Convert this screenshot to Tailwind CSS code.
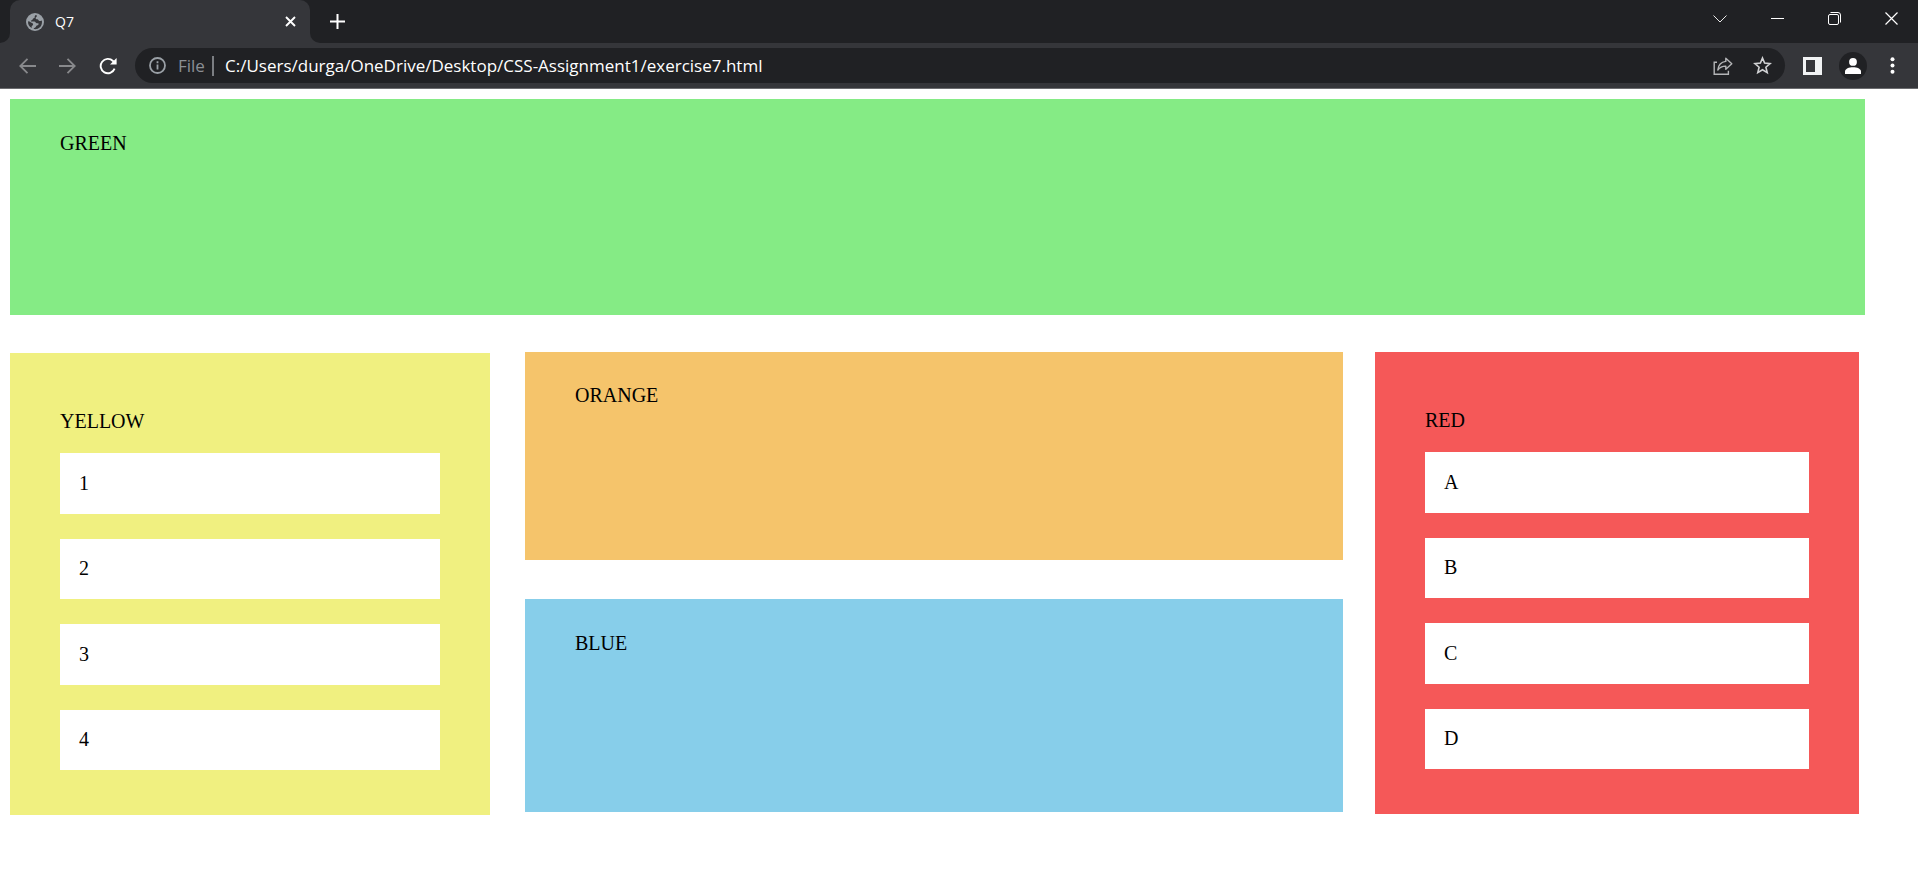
<!DOCTYPE html>
<html lang="en">
<head>
<meta charset="utf-8">
<title>Q7</title>
<script src="https://cdn.jsdelivr.net/npm/@tailwindcss/browser@4"></script>
</head>
<body class="min-h-screen bg-white text-black">

<header class="border-b border-[#6b6c6f] bg-[#35363a] font-['Open_Sans',sans-serif] text-white">
  <!-- Tab strip -->
  <div class="flex h-[43px] bg-[#202124]">
    <div class="flex w-[10px] items-end bg-[#35363a]"><span class="h-full w-full rounded-br-[10px] bg-[#202124]"></span></div>
    <div class="flex w-[300px] items-center rounded-t-[10px] bg-[#35363a] pr-[14px] pl-4">
      <svg class="size-[18px]" viewBox="0 0 18 18">
        <circle cx="9" cy="9" r="9" fill="#9aa0a6"/>
        <path d="M10 2.1c-1 .4-1.500 1.200-1.300 2.200.100.700-.9.800-1.500 1.100-.9.500-.4 1.600-1.300 1.900-.8.200-1.200.3-.9 1.100h3.200c1.600 0 1.400 1.900 2.700 1.900h1.500c.7 1.300-.4 2.200-1.500 2.200-.8 0-.8 1.300-1.300 1.800-.6.600-1.900.6-1.900 1.700 4.100.9 8.300-2.100 8.300-7 0-.6-.1-1-.2-1.400-.5.500-1.600.6-2.400.3-1.200-.5-.9-1.700-2-1.700-1.200 0-1.900-.3-1.700-1.500.1-.9 1.200-.9 1.200-1.800-.1-.4-.5-.7-.9-.8zM2.100 8.300c-.4 3 1 5.500 3.600 6.800.2-.8-.2-1.300.1-2 .3-.8 1.300-.7 1.300-1.700 0-1.700-1.600-1.400-2.500-2.200-.6-.6-1.500-.9-2.500-.9z" fill="#35363a"/>
      </svg>
      <span class="ml-[11px] grow text-[14px] leading-5">Q7</span>
      <button aria-label="Close tab">
        <svg class="size-[11px]" viewBox="0 0 11 11" fill="none" stroke="#fff" stroke-width="1.900"><path d="M1 1l9 9M10 1L1 10"/></svg>
      </button>
    </div>
    <div class="flex w-[10px] bg-[#35363a]"><span class="h-full w-full rounded-bl-[10px] bg-[#202124]"></span></div>
    <button aria-label="New tab" class="ml-[10px]">
      <svg class="size-[15px]" viewBox="0 0 15 15" fill="none" stroke="#fff" stroke-width="2"><path d="M7.500 0v15M0 7.500h15"/></svg>
    </button>
    <div class="ml-auto flex h-[37px] items-center gap-11 pr-5 text-white">
      <button aria-label="Search tabs"><svg class="size-[14px]" viewBox="0 0 14 14" fill="none" stroke="currentColor" stroke-width="0.900"><path d="M.5 3.500L7 10l6.500-6.500"/></svg></button>
      <button aria-label="Minimize"><svg class="size-[13px]" viewBox="0 0 13 13" fill="none" stroke="currentColor"><path d="M0 6.500h13"/></svg></button>
      <button aria-label="Restore"><svg class="size-[13px]" viewBox="0 0 13 13" fill="none" stroke="currentColor"><rect x=".5" y="2.500" width="10" height="10" rx="1.500"/><path d="M2.500.5H10A2.500 2.500 0 0112.500 3v7.500"/></svg></button>
      <button aria-label="Close window"><svg class="size-[13px]" viewBox="0 0 13 13" fill="none" stroke="currentColor" stroke-width="1.200"><path d="M.5.500l12 12M12.500.5l-12 12"/></svg></button>
    </div>
  </div>

  <!-- Toolbar -->
  <div class="flex items-center py-[5px] pr-[23px] pl-[19px]">
    <button aria-label="Back"><svg class="h-4 w-[17px]" viewBox="0 0 17 16" fill="none" stroke="#88898c" stroke-width="1.800"><path d="M17 8H1.500M8.500.8L1.300 8l7.200 7.200"/></svg></button>
    <button aria-label="Forward" class="ml-[23px]"><svg class="h-4 w-[17px]" viewBox="0 0 17 16" fill="none" stroke="#88898c" stroke-width="1.800"><path d="M0 8h15.500M8.500.8L15.700 8l-7.200 7.200"/></svg></button>
    <button aria-label="Reload" class="ml-[23px]"><svg class="size-[18px]" viewBox="0 0 18 18" fill="none"><path d="M15.600 11.700A7.200 7.200 0 1 1 14 4l1.200 1.200" stroke="#fff" stroke-width="1.900"/><path d="M17.600 1v6.600H11z" fill="#fff"/></svg></button>
    <div class="ml-[18px] flex h-[35px] grow items-center rounded-full bg-[#202124] pr-[13px] pl-[14px] text-[17px] leading-6">
      <button aria-label="Site information"><svg class="size-[17px]" viewBox="0 0 17 17" fill="none"><circle cx="8.500" cy="8.500" r="7.500" stroke="#9aa0a6" stroke-width="1.800"/><path d="M8.500 7.500v5M8.500 4.300v1.900" stroke="#9aa0a6" stroke-width="1.800"/></svg></button>
      <span class="ml-3 w-[34px] text-[#8b8f94]">File</span>
      <span class="h-5 w-[2px] bg-[#7b7e82]"></span>
      <input aria-label="Address" class="ml-[11px] min-w-0 grow bg-transparent outline-none" value="C:/Users/durga/OneDrive/Desktop/CSS-Assignment1/exercise7.html">
      <button aria-label="Share"><svg class="h-[18px] w-5" viewBox="0 0 20 18" fill="none" stroke="#b4b5b7" stroke-width="1.400"><path d="M4 5.200H1.200v12h14.200v-3.400"/><path d="M12.800 1.200l6 5.600-6 5.500V9.100c-3.600-.1-6 1.200-8 3.900.5-4.400 3-8 8-8.600z" stroke-linejoin="round"/></svg></button>
      <button aria-label="Bookmark" class="ml-5"><svg class="size-[19px]" viewBox="0 0 19 19" fill="none" stroke="#d0d1d3" stroke-width="1.600"><path d="M9.500 2l2.100 5.100 5.500.5-4.200 3.600 1.300 5.400-4.700-2.900-4.700 2.900 1.300-5.400-4.200-3.600 5.500-.5z"/></svg></button>
    </div>
    <button aria-label="Side panel" class="ml-[18px]"><svg class="h-[18px] w-[19px]" viewBox="0 0 19 18"><path d="M0 0h19v18H0zM3 3v12h9V3z" fill="#f1f3f4" fill-rule="evenodd"/></svg></button>
    <button aria-label="Profile" class="ml-[17px] flex size-7 items-center justify-center rounded-full bg-[#202124]"><svg class="h-4 w-4" viewBox="0 0 16 16" fill="#fff"><circle cx="8" cy="3.900" r="3.900"/><path d="M0 16v-2.400C0 10.800 4 9.300 8 9.300s8 1.500 8 4.300V16z"/></svg></button>
    <button aria-label="Menu" class="ml-[23px]"><svg class="h-[17px] w-[5px]" viewBox="0 0 5 17" fill="#fff"><circle cx="2.500" cy="2.200" r="2"/><circle cx="2.500" cy="8.500" r="2"/><circle cx="2.500" cy="14.800" r="2"/></svg></button>
  </div>
</header>

<main class="pt-[10px] pr-[53px] pl-[10px] font-['Liberation_Serif',serif] text-[20px] leading-[23px]">
  <section class="h-[216px] bg-[#85eb85] px-[50px] pt-[33px]"><h2>GREEN</h2></section>

  <div class="mt-[37px] mr-[6px] grid grid-cols-[480fr_821fr_484fr] items-start gap-x-8">
    <section class="mt-px bg-[#f0f080] px-[50px] pt-[57px] pb-[45px]">
      <h2>YELLOW</h2>
      <ul class="mt-5 grid h-[317px] auto-rows-fr gap-[25px]">
        <li class="flex items-center bg-white px-[19px]">1</li>
        <li class="flex items-center bg-white px-[19px]">2</li>
        <li class="flex items-center bg-white px-[19px]">3</li>
        <li class="flex items-center bg-white px-[19px]">4</li>
      </ul>
    </section>

    <div class="ml-[3px]">
      <section class="h-[208px] bg-[#f5c46b] px-[50px] pt-8"><h2>ORANGE</h2></section>
      <section class="mt-[39px] h-[213px] bg-[#87ceea] px-[50px] pt-[33px]"><h2>BLUE</h2></section>
    </div>

    <section class="bg-[#f55858] px-[50px] pt-[57px] pb-[45px]">
      <h2>RED</h2>
      <ul class="mt-5 grid h-[317px] auto-rows-fr gap-[25px]">
        <li class="flex items-center bg-white px-[19px]">A</li>
        <li class="flex items-center bg-white px-[19px]">B</li>
        <li class="flex items-center bg-white px-[19px]">C</li>
        <li class="flex items-center bg-white px-[19px]">D</li>
      </ul>
    </section>
  </div>
</main>
</body>
</html>
